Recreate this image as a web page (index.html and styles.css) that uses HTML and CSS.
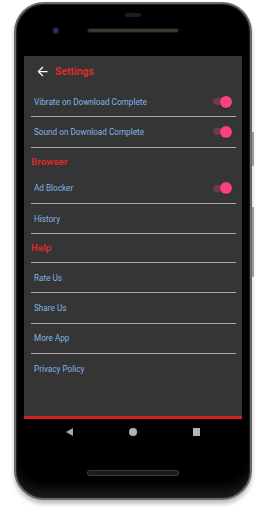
FILE: index.html
```html
<!DOCTYPE html>
<html>
<head>
<meta charset="utf-8">
<link rel="stylesheet" href="styles.css">
</head>
<body>
<div class="phone">
  <div class="side-btn side-btn--power"></div>
  <div class="side-btn side-btn--volume"></div>
  <div class="top">
    <div class="earpiece"></div>
    <div class="top-row">
      <div class="camera"></div>
      <div class="speaker"></div>
      <div></div>
    </div>
  </div>
  <div class="screen">
    <div class="toolbar">
      <svg class="back" viewBox="0 0 24 24" width="15" height="15"><path fill="#fff" d="M20 11H7.83l5.59-5.59L12 4l-8 8 8 8 1.41-1.41L7.83 13H20v-2z"/></svg>
      <span class="title">Settings</span>
    </div>
    <div class="list">
      <div class="row"><span class="label">Vibrate on Download Complete</span><span class="switch"><span class="track"></span><span class="thumb"></span></span></div>
      <div class="divider"></div>
      <div class="row"><span class="label">Sound on Download Complete</span><span class="switch"><span class="track"></span><span class="thumb"></span></span></div>
      <div class="divider"></div>
      <div class="cat">Browser</div>
      <div class="row"><span class="label">Ad Blocker</span><span class="switch"><span class="track"></span><span class="thumb"></span></span></div>
      <div class="divider"></div>
      <div class="row"><span class="label">History</span></div>
      <div class="divider"></div>
      <div class="cat cat--lined">Help</div>
      <div class="divider"></div>
      <div class="row"><span class="label">Rate Us</span></div>
      <div class="divider"></div>
      <div class="row"><span class="label">Share Us</span></div>
      <div class="divider"></div>
      <div class="row"><span class="label">More App</span></div>
      <div class="divider"></div>
      <div class="row"><span class="label">Privacy Policy</span></div>
    </div>
    <div class="redline"></div>
  </div>
  <div class="nav">
    <span class="nav-cell"><span class="nav-back"></span></span>
    <span class="nav-cell"><span class="nav-home"></span></span>
    <span class="nav-cell"><span class="nav-recent"></span></span>
  </div>
  <div class="bottom-speaker"></div>
</div>
</body>
</html>
```

FILE: styles.css
```css
html, body {
  margin: 0;
  padding: 0;
  background: #ffffff;
}
body {
  font-family: Roboto, "Noto Sans", Arial, sans-serif;
  width: 269px;
  height: 512px;
  overflow: hidden;
}
.phone {
  margin: 2px 0 0 14px;
  width: 238px;
  height: 498px;
  box-sizing: border-box;
  border: 2px solid #6a6a6a;
  border-radius: 30px;
  background: #000;
  position: relative;
  display: flex;
  flex-direction: column;
  box-shadow: inset 0 0 0 1px #1e1e1e, inset 0 -14px 12px -6px #1c1c1c, 0 4px 4px rgba(0, 0, 0, 0.25);
}
.side-btn {
  position: absolute;
  right: -4px;
  width: 2px;
  background: #9a9a9a;
  border-radius: 0 1px 1px 0;
}
.side-btn--power { top: 128px; height: 34px; }
.side-btn--volume { top: 203px; height: 70px; }
.top {
  height: 52px;
  flex: none;
  display: flex;
  flex-direction: column;
  align-items: center;
}
.earpiece {
  margin-top: 9px;
  width: 16px;
  height: 4px;
  border-radius: 2px;
  background: #1c1c22;
}
.top-row {
  margin-top: 10px;
  width: 100%;
  display: grid;
  grid-template-columns: 1fr auto 1fr;
  align-items: center;
}
.camera {
  margin-left: 36px;
  width: 7px;
  height: 7px;
  border-radius: 50%;
  background: radial-gradient(circle at 55% 55%, #3b4a9a 0, #1b2250 40%, #0c0f1e 75%);
}
.speaker {
  width: 90px;
  height: 3px;
  border-radius: 2px;
  background: #38382c;
  box-shadow: 0 0 0 1px #141414;
}
.screen {
  margin: 0 8px;
  width: 218px;
  height: 363px;
  flex: none;
  background: #353535;
  display: flex;
  flex-direction: column;
}
.toolbar {
  height: 31px;
  flex: none;
  display: flex;
  align-items: center;
  padding-left: 11px;
  box-sizing: border-box;
}
.back {
  display: block;
  margin-top: -1px;
}
.title {
  margin-left: 5px;
  color: #dd2c2c;
  font-weight: 700;
  font-size: 10.4px;
  margin-top: -1px;
}
.list {
  flex: 1;
}
.row {
  height: 29.3px;
  display: flex;
  align-items: center;
  justify-content: space-between;
  padding: 0 11px 0 10px;
}
.label {
  color: #82b4e6;
  font-size: 8.2px;
}
.divider {
  height: 1px;
  margin: 0 6px 0 7px;
  background: #a8a8a8;
}
.cat {
  height: 26px;
  box-sizing: border-box;
  padding: 8px 0 0 7px;
  line-height: 11px;
  color: #d52b2b;
  font-weight: 700;
  font-size: 9.8px;
}
.cat--lined {
  height: 28px;
}
.switch {
  position: relative;
  width: 18px;
  height: 12px;
  display: flex;
  align-items: center;
}
.track {
  width: 16px;
  height: 7px;
  border-radius: 4px;
  background: #6d3a51;
}
.thumb {
  position: absolute;
  right: -1px;
  top: 0;
  width: 12px;
  height: 12px;
  border-radius: 50%;
  background: #fb417f;
  box-shadow: 0 0.5px 1px rgba(0, 0, 0, 0.5);
}
.redline {
  height: 3px;
  flex: none;
  background: #d32121;
}
.nav {
  height: 26px;
  flex: none;
  display: flex;
  justify-content: center;
  align-items: center;
  gap: 43.5px;
}
.nav-cell {
  width: 20px;
  display: flex;
  justify-content: center;
  align-items: center;
}
.nav-back {
  width: 0;
  height: 0;
  border-top: 4px solid transparent;
  border-bottom: 4px solid transparent;
  border-right: 7px solid #a9a9a9;
}
.nav-home {
  width: 7.5px;
  height: 7.5px;
  border-radius: 50%;
  background: #b3b3b3;
}
.nav-recent {
  width: 7.5px;
  height: 7.5px;
  background: #b3b3b3;
}
.bottom-speaker {
  margin: 26px auto 0;
  width: 90px;
  height: 4px;
  border-radius: 3px;
  background: #1a1a1a;
  box-shadow: 0 0 0 1px #3a3a3a;
}
```
